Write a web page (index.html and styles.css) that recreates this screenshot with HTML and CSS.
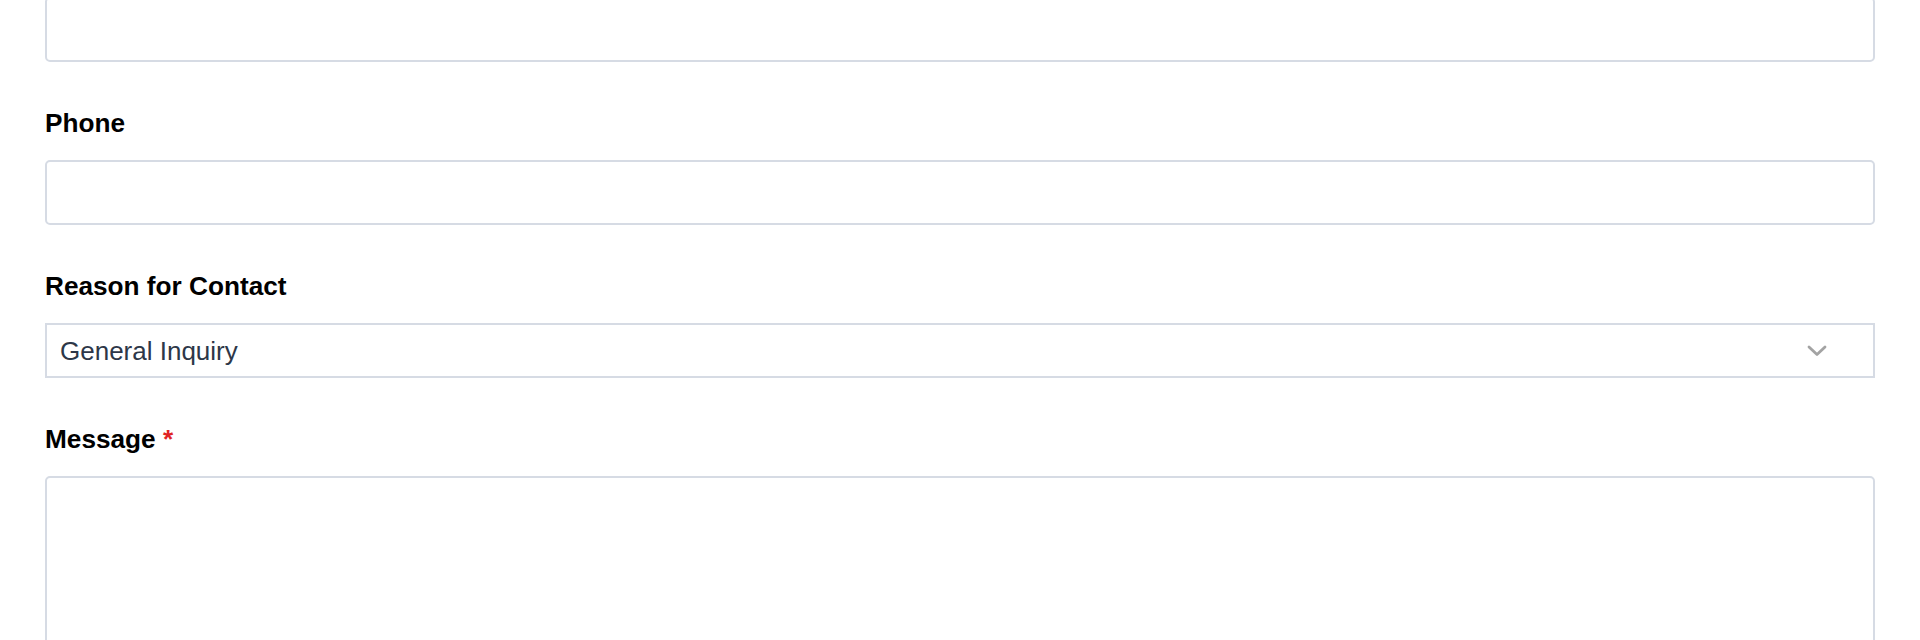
FILE: index.html
```html
<!DOCTYPE html>
<html lang="en">
<head>
<meta charset="utf-8">
<title>Contact form</title>
<link rel="stylesheet" href="styles.css">
</head>
<body>
<form class="form">
  <div class="group">
    <input class="input" type="email" aria-label="Email">
  </div>
  <div class="group">
    <label class="label" for="phone">Phone</label>
    <input class="input" id="phone" type="tel">
  </div>
  <div class="group">
    <label class="label" for="reason">Reason for Contact</label>
    <div class="select-wrap">
      <select class="select" id="reason">
        <option>General Inquiry</option>
        <option>Support</option>
        <option>Sales</option>
      </select>
      <svg class="chevron" width="20" height="12" viewBox="0 0 20 12" aria-hidden="true">
        <path d="M2 2 L10 9.5 L18 2" fill="none" stroke="#a3a3a3" stroke-width="2.8" stroke-linecap="round" stroke-linejoin="round"/>
      </svg>
    </div>
  </div>
  <div class="group">
    <label class="label" for="message">Message <span class="req">*</span></label>
    <textarea class="textarea" id="message"></textarea>
  </div>
</form>
</body>
</html>
```

FILE: styles.css
```css
html, body {
  margin: 0;
  padding: 0;
  background: #ffffff;
  overflow: hidden;
}

body {
  font-family: "Liberation Sans", Arial, sans-serif;
  color: #000;
}

.form {
  display: flex;
  flex-direction: column;
  gap: 42px;
  padding: 0 45px;
  margin-top: -3px;
}

.group {
  display: flex;
  flex-direction: column;
  gap: 18px;
}

.label {
  display: block;
  font-size: 26.2px;
  line-height: 38px;
  font-weight: 700;
  color: #000;
}

.req {
  color: #e02424;
}

.input,
.select,
.textarea {
  box-sizing: border-box;
  width: 100%;
  margin: 0;
  border: 2px solid #d6dbe4;
  background: #fff;
  font-family: "Liberation Sans", Arial, sans-serif;
  font-size: 26px;
  color: #2d3748;
  outline: none;
}

.input {
  height: 65px;
  border-radius: 5px;
  padding: 0 14px;
}

.select-wrap {
  position: relative;
}

.select {
  height: 55px;
  border-radius: 0;
  padding: 0 13px;
  appearance: none;
  -webkit-appearance: none;
}

.chevron {
  position: absolute;
  right: 48px;
  top: 50%;
  transform: translateY(-50%);
  pointer-events: none;
}

.textarea {
  height: 220px;
  border-radius: 5px;
  padding: 14px;
  resize: none;
  display: block;
}
```
